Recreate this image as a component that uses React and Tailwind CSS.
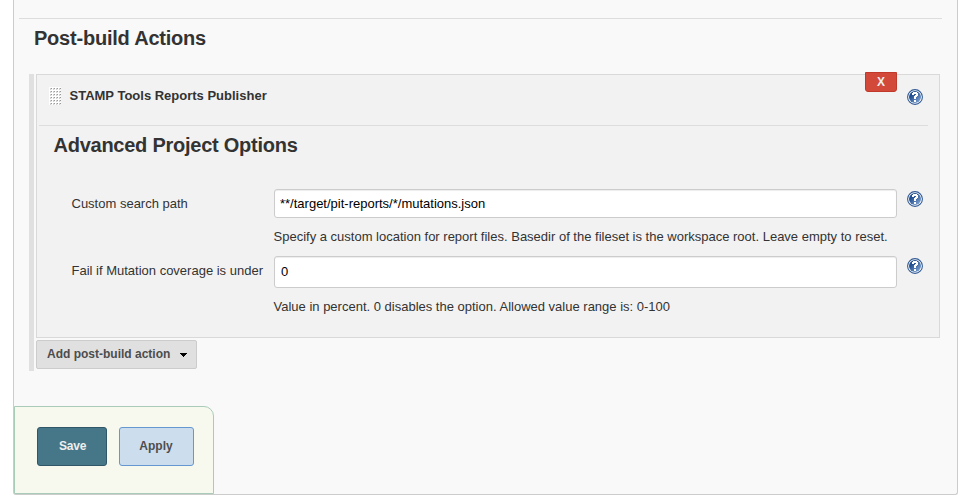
const dots = Array.from({ length: 24 });

function HelpIcon() {
  return (
    <svg className="block size-4 shrink-0" viewBox="0 0 16 16" aria-label="Help">
      <defs>
        <linearGradient id="help" x1="0" y1="0" x2="1" y2="1">
          <stop offset="0.3" stopColor="#24508f" />
          <stop offset="1" stopColor="#8fb0dc" />
        </linearGradient>
      </defs>
      <circle cx="8" cy="8" r="7.4" fill="#fff" stroke="#315a94" strokeWidth="1.1" />
      <circle cx="8" cy="8" r="6" fill="url(#help)" />
      <path d="M5 4h1v-1h4v1h1v3h-1v1h-1v2h-2v-3h1v-1h1v-1h-2v1h-2z" fill="#fff" />
      <rect x="7" y="11" width="2" height="2" fill="#fff" />
    </svg>
  );
}

function Grip() {
  return (
    <div className="grid h-[18px] w-3 shrink-0 grid-cols-4 bg-white">
      {dots.map((_, i) => (
        <svg key={i} className="block size-[3px]" viewBox="0 0 3 3" shapeRendering="crispEdges">
          <path d="M1 1h2v2h-2z" fill="#d0d0d0" />
          <path d="M2 1h1v1h-1z" fill="#999" />
          <path d="M2 2h1v1h-1z" fill="#eee" />
        </svg>
      ))}
    </div>
  );
}

export default function App() {
  return (
    <div className="h-[500px] w-[967px] overflow-hidden bg-white pl-[13px] font-['Liberation_Sans',Arial,sans-serif] text-[13px] leading-4 text-[#333]">
      <main className="flex h-[495px] w-[945px] flex-col rounded-b-[3px] border border-t-0 border-[#ccc] bg-[#f9f9f9]">
        <h2 className="mt-[18px] ml-[5px] h-14 w-[923px] shrink-0 border-t border-[#ddd] pt-[7px] pl-[15px] text-[20px] leading-6 font-bold tracking-[-0.22px]">
          Post-build Actions
        </h2>
        <section className="ml-[15px] h-[297px] w-[911px] shrink-0 border-l-[5px] border-[#e0e0e0] pl-[2px]">
          <div className="h-[264px] w-[904px] border border-[#d9d9d9] bg-[#f2f2f2]">
            <header className="ml-[2px] flex h-[51px] w-[889px] items-start border-b border-[#ddd] pl-[10px]">
              <div className="pt-3">
                <Grip />
              </div>
              <div className="pt-[13px] pl-[8.5px] font-bold">STAMP Tools Reports Publisher</div>
              <button className="-mt-[3px] mr-[10px] ml-auto h-5 w-8 shrink-0 rounded-b-[3px] border border-[#c0392b] bg-[#d24939] text-center text-[12px] leading-[18px] font-bold text-[#eee]">
                X
              </button>
              <div className="pt-[14px] pr-[5px]">
                <HelpIcon />
              </div>
            </header>
            <h3 className="h-[63px] pt-[7px] pl-[16.5px] text-[20px] leading-6 font-bold tracking-[-0.25px]">Advanced Project Options</h3>
            <div className="flex h-[67px] items-start pl-[34px]">
              <label className="w-[203px] shrink-0 pt-[7px] pl-[0.5px]">Custom search path</label>
              <div className="w-[623px] shrink-0">
                <input
                  className="block h-[29px] w-full rounded-[3px] border border-[#ccc] bg-white px-[5px] text-black shadow-[inset_0_1px_1px_rgba(0,0,0,0.075)]"
                  defaultValue="**/target/pit-reports/*/mutations.json"
                />
                <p className="-ml-[0.5px] pt-[11px] whitespace-nowrap">
                  Specify a custom location for report files. Basedir of the fileset is the workspace root. Leave empty to reset.
                </p>
              </div>
              <div className="pt-[2px] pl-[10px]">
                <HelpIcon />
              </div>
            </div>
            <div className="flex items-start pl-[34px]">
              <label className="w-[203px] shrink-0 pt-[7px] pl-[0.5px] whitespace-nowrap">Fail if Mutation coverage is under</label>
              <div className="w-[623px] shrink-0">
                <input
                  className="block h-8 w-full rounded-[3px] border border-[#ccc] bg-white px-[6px] pb-[2px] text-black shadow-[inset_0_1px_1px_rgba(0,0,0,0.075)]"
                  defaultValue="0"
                />
                <p className="-ml-[0.5px] pt-[11px]">Value in percent. 0 disables the option. Allowed value range is: 0-100</p>
              </div>
              <div className="pt-[2px] pl-[10px]">
                <HelpIcon />
              </div>
            </div>
          </div>
          <button className="mt-[2px] flex h-[29px] w-[161px] items-center rounded-[2px] border border-[#ccc] bg-[#e0e0e0] pb-[2px] pl-[10px] text-[12px] font-bold whitespace-nowrap text-[#4d4d4d]">
            Add post-build action
            <svg className="mt-[2px] ml-auto mr-[9px] block h-1 w-[7px]" viewBox="0 0 7 4" shapeRendering="crispEdges">
              <path d="M0 0h7v1h-1v1h-1v1h-1v1h-1v-1h-1v-1h-1v-1h-1z" fill="#000" />
            </svg>
          </button>
        </section>
        <footer className="mt-[35px] flex h-[88px] w-[200px] shrink-0 gap-3 rounded-tr-[10px] border border-[#a8ccb8] bg-[#f7f8ee] pt-5 pl-[22px]">
          <button className="h-[39px] w-[70px] rounded-[3px] border border-[#2f5768] bg-[#457788] pb-[2px] pl-[1px] text-[12px] font-bold tracking-[-0.2px] text-[#eee]">
            Save
          </button>
          <button className="h-[39px] w-[75px] rounded-[3px] border border-[#6597d0] bg-[#ccdded] pr-[1px] pb-[2px] text-[12px] font-bold text-[#4d4d4d]">
            Apply
          </button>
        </footer>
      </main>
    </div>
  );
}
